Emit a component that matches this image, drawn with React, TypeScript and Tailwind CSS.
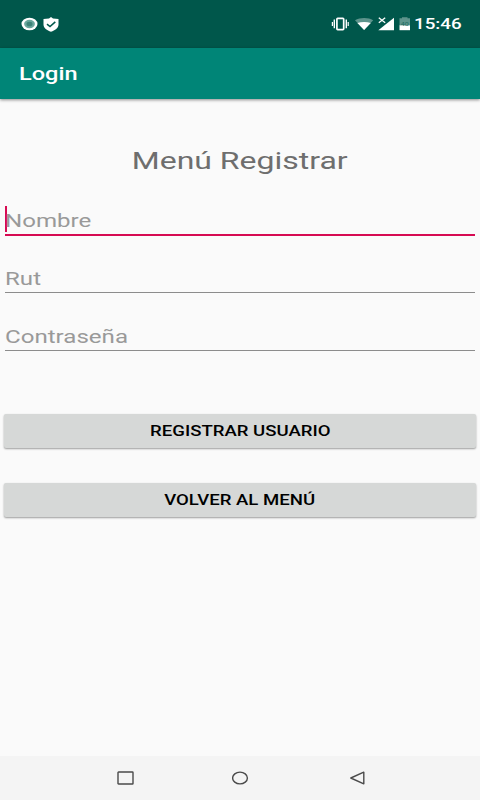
import React, { useState } from 'react'

type FieldProps = {
  label: string
  active?: boolean
  onFocus: () => void
}

function Field({ label, active, onFocus }: FieldProps): React.ReactElement {
  return (
    <div onClick={onFocus} className="h-[58px] px-[5px] cursor-text">
      <div
        className={`relative ${active ? 'h-[33px] border-b-2 border-[#d60a52]' : 'h-[32px] border-b border-[#8c8c8c]'}`}
      >
        {active && <span className="absolute left-0 top-[3px] w-[2px] h-[26px] bg-[#d60a52]" />}
        <span className="block w-fit origin-left -ml-[0.5px] scale-x-[1.31] pt-[6px] text-[18.4px] leading-[24px] text-[#999999] whitespace-nowrap">
          {label}
        </span>
      </div>
    </div>
  )
}

function ActionButton({ children }: { children: React.ReactNode }): React.ReactElement {
  return (
    <button className="flex h-[34px] w-full items-center justify-center rounded-[2px] bg-[#d6d8d7] shadow-[0_1px_2px_rgba(0,0,0,0.38)] cursor-pointer">
      <span className="scale-x-[1.265] text-[14.7px] leading-[20px] font-medium text-black whitespace-nowrap">{children}</span>
    </button>
  )
}

function StatusBar(): React.ReactElement {
  return (
    <div className="flex h-[48px] items-center justify-between bg-[#00574b] pl-[21px] pr-[19px] text-white">
      <div className="flex items-center gap-[5px]">
        <svg width="17" height="14" viewBox="0 0 17 14">
          <ellipse cx="8.5" cy="7" rx="8" ry="6.3" fill="#fff" />
          <ellipse cx="8.5" cy="7" rx="5.4" ry="4.2" fill="#6aa79d" />
          <ellipse cx="8.5" cy="7" rx="3" ry="2.3" fill="#3d8378" />
        </svg>
        <svg width="16" height="15" viewBox="0 0 16 15">
          <path d="M8 0 L10 1.6 L15.5 2 V7.5 C15.5 11 12 13.5 8 14.7 C4 13.5 .5 11 .5 7.5 V2 L6 1.6 Z" fill="#fff" />
          <path d="M4 7.2 L7 9.6 L12.3 4.9" fill="none" stroke="#00574b" strokeWidth="1.5" />
        </svg>
      </div>
      <div className="flex items-center">
        <svg width="84" height="16" viewBox="331 16 84 16">
          {/* vibrate */}
          <rect x="336.9" y="18.4" width="6.8" height="11.2" rx="0.8" fill="none" stroke="#fff" strokeWidth="1.7" />
          <path d="M334.3 19.5 V28.3 M346.3 19.5 V28.3" stroke="#fff" strokeWidth="1.4" />
          <path d="M332.4 22 V26 M348.2 22 V26" stroke="#fff" strokeWidth="1.2" />
          {/* wifi */}
          <path d="M355 20.2 C360 17.3 368.5 17.3 373.2 20.2 L364.1 30 Z" fill="#5d948c" />
          <path d="M357.4 23 C361.5 21.8 366.7 21.8 370.8 23 L364.1 30 Z" fill="#fff" />
          {/* signal */}
          <path d="M394 17.8 V30.2 H378.3 Z" fill="#fff" />
          <path d="M377 16.5 H387 V22 L385 23.8 H377 Z" fill="#00574b" />
          <path d="M378.8 17.8 L385.2 22.8 M385.2 17.8 L378.8 22.8" stroke="#fff" strokeWidth="1.3" />
          {/* battery */}
          <path d="M399.5 18.3 H402 V17.2 H407.5 V18.3 H410 V26 H399.5 Z" fill="#5d948c" />
          <path d="M399.5 25.4 H410 V30.2 H399.5 Z" fill="#fff" />
          <text x="404.7" y="26" textAnchor="middle" fontSize="6" textLength="8" lengthAdjust="spacingAndGlyphs" fill="#1c6a5f">40</text>
        </svg>
        <span className="w-[46px]">
          <span className="block w-fit origin-left -ml-px scale-x-[1.22] text-[15.4px] leading-[20px] font-medium">15:46</span>
        </span>
      </div>
    </div>
  )
}

function NavigationBar(): React.ReactElement {
  return (
    <div className="flex h-[44px] items-center justify-between bg-[#f4f4f4] px-[117px]">
      <svg width="17" height="14" viewBox="0 0 17 14" fill="none" stroke="#4a4a4a" strokeWidth="1.4">
        <rect x="1" y="1" width="15" height="12" rx="0.6" />
      </svg>
      <svg width="17" height="14" viewBox="0 0 17 14" fill="none" stroke="#4a4a4a" strokeWidth="1.4">
        <ellipse cx="8" cy="7" rx="7.4" ry="5.9" />
      </svg>
      <svg width="17" height="14" viewBox="0 0 17 14" className="overflow-visible" fill="none" stroke="#4a4a4a" strokeWidth="1.4">
        <path d="M17.8 1.2 V12.8 L4.8 7 Z" strokeLinejoin="round" />
      </svg>
    </div>
  )
}

const FIELDS = ['Nombre', 'Rut', 'Contraseña']

export default function App(): React.ReactElement {
  const [active, setActive] = useState('Nombre')

  return (
    <div className="flex h-[800px] w-[480px] flex-col overflow-hidden bg-[#fafafa] font-['Roboto',sans-serif]">
      <StatusBar />
      <header className="flex h-[51px] shrink-0 items-center bg-[#008577] pl-[18.5px] shadow-[0_1px_3px_rgba(0,0,0,0.45)]">
        <h1 className="origin-left scale-x-[1.28] text-[18.4px] leading-[24px] font-medium text-white">Login</h1>
      </header>

      <main className="flex flex-1 flex-col">
        <h2 className="mx-auto mt-[46px] scale-x-[1.305] text-[24.5px] leading-[32px] text-[#6e6e6e] whitespace-nowrap">
          Menú Registrar
        </h2>

        <div className="mt-[26px]">
          {FIELDS.map((label) => (
            <Field key={label} label={label} active={active === label} onFocus={() => setActive(label)} />
          ))}
        </div>

        <div className="mt-[37px] flex flex-col gap-[35px] px-1">
          <ActionButton>REGISTRAR USUARIO</ActionButton>
          <ActionButton>VOLVER AL MENÚ</ActionButton>
        </div>
      </main>

      <NavigationBar />
    </div>
  )
}
